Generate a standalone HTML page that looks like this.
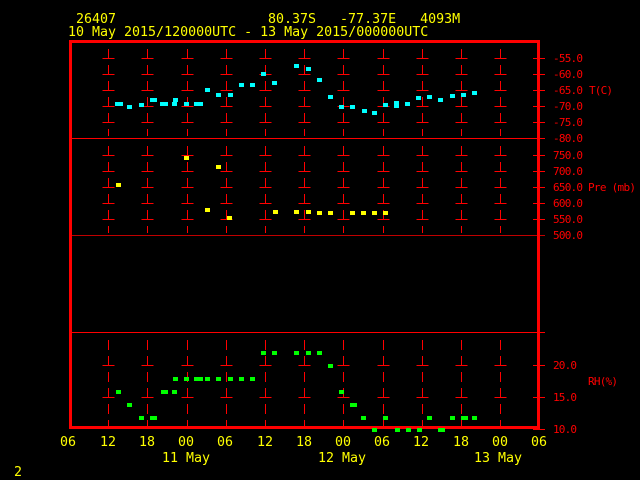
<!DOCTYPE html>
<html><head><meta charset="utf-8"><style>
html,body{margin:0;padding:0;background:#000;width:640px;height:480px;overflow:hidden}
svg text{font-family:"DejaVu Sans Mono","Liberation Mono",monospace;font-size:13.3px}
.y{fill:#ffff00}.r{fill:#ff0000}
.r text{font-size:11px}
</style></head><body>
<svg id="s" width="640" height="480" viewBox="0 0 640 480" xmlns="http://www.w3.org/2000/svg">
<rect width="640" height="480" fill="#000"/>
<text class="y" x="76" y="23">26407</text>
<text class="y" x="268" y="23" xml:space="preserve">80.37S   -77.37E   4093M</text>
<text class="y" x="68" y="36">10 May 2015/120000UTC - 13 May 2015/000000UTC</text>
<g id="grid" stroke="#ff0000" stroke-width="1"></g>
<line x1="70" y1="138.5" x2="545" y2="138.5" stroke="#ff0000"/>
<line x1="70" y1="235.5" x2="545" y2="235.5" stroke="#c00000"/>
<line x1="70" y1="332.5" x2="545" y2="332.5" stroke="#ff0000"/>
<rect x="70.5" y="41.5" width="468" height="386" fill="none" stroke="#ff0000" stroke-width="3"/>
<g class="r">
<text x="553" y="62" textLength="30">-55.0</text><text x="553" y="78" textLength="30">-60.0</text><text x="553" y="94" textLength="30">-65.0</text>
<text x="553" y="110" textLength="30">-70.0</text><text x="553" y="126" textLength="30">-75.0</text><text x="553" y="142" textLength="30">-80.0</text>
<text x="553" y="159" textLength="30">750.0</text><text x="553" y="175" textLength="30">700.0</text><text x="553" y="191" textLength="30">650.0</text>
<text x="553" y="207" textLength="30">600.0</text><text x="553" y="223" textLength="30">550.0</text><text x="553" y="239" textLength="30">500.0</text>
<text x="553" y="369" textLength="24">20.0</text><text x="553" y="401" textLength="24">15.0</text><text x="553" y="433" textLength="24">10.0</text>
<text x="589" y="94" textLength="24">T(C)</text>
<text x="588" y="191" textLength="48">Pre (mb)</text>
<text x="588" y="385" textLength="30">RH(%)</text>
</g>
<g class="y">
<text x="60" y="446">06</text><text x="100" y="446">12</text><text x="139" y="446">18</text>
<text x="178" y="446">00</text><text x="217" y="446">06</text><text x="257" y="446">12</text>
<text x="296" y="446">18</text><text x="335" y="446">00</text><text x="374" y="446">06</text>
<text x="413" y="446">12</text><text x="453" y="446">18</text><text x="492" y="446">00</text>
<text x="531" y="446">06</text>
<text x="162" y="462">11 May</text><text x="318" y="462">12 May</text><text x="474" y="462">13 May</text>
<text x="14" y="476">2</text>
</g>
<g id="pts"></g>
</svg>
<script>
var NS="http://www.w3.org/2000/svg",g=document.getElementById("grid"),p=document.getElementById("pts");
function L(a,b,c,d,da,col){var l=document.createElementNS(NS,"line");l.setAttribute("x1",a);l.setAttribute("y1",b);l.setAttribute("x2",c);l.setAttribute("y2",d);if(da)l.setAttribute("stroke-dasharray",da);if(col)l.setAttribute("stroke",col);g.appendChild(l);}
var ty=[58,74,90,106,122,155,171,187,203,219,365,397];
for(var k=1;k<=11;k++){var x=Math.round(69+39.2*k)+0.5;
 L(x,49,x,136,"10,6");L(x,146,x,233,"10,6");L(x,340,x,426,"10,6");
 ty.forEach(function(y){L(x-6,y+0.5,x+6,y+0.5);});}
ty.concat([138,235,332,429]).forEach(function(y){L(533,y+0.5,545,y+0.5);});
function P(a,c){a.forEach(function(q){var r=document.createElementNS(NS,"rect");r.setAttribute("x",q[0]-2);r.setAttribute("y",q[1]-2);r.setAttribute("width",5);r.setAttribute("height",4);r.setAttribute("fill",c);p.appendChild(r);});}
P([[117,104],[120,104],[129,107],[141,105],[152,100],[154,100],[162,104],[165,104],[174,104],[175,100],[186,104],[196,104],[200,104],[207,90],[218,95],[230,95],[241,85],[252,85],[263,74],[274,83],[296,66],[308,69],[319,80],[330,97],[341,107],[352,107],[364,111],[374,113],[385,105],[396,103],[396,106],[407,104],[418,98],[429,97],[440,100],[452,96],[463,95],[474,93]],"#00ffff");
P([[118,185],[186,158],[218,167],[207,210],[229,218],[275,212],[296,212],[308,212],[319,213],[330,213],[352,213],[363,213],[374,213],[385,213]],"#ffff00");
P([[118,392],[129,405],[141,418],[152,418],[154,418],[163,392],[165,392],[174,392],[175,379],[186,379],[196,379],[200,379],[207,379],[218,379],[230,379],[241,379],[252,379],[263,353],[274,353],[296,353],[308,353],[319,353],[330,366],[341,392],[352,405],[354,405],[363,418],[374,430],[385,418],[397,430],[408,430],[419,430],[429,418],[440,430],[442,430],[452,418],[463,418],[465,418],[474,418]],"#00ff00");
</script>
</body></html>
